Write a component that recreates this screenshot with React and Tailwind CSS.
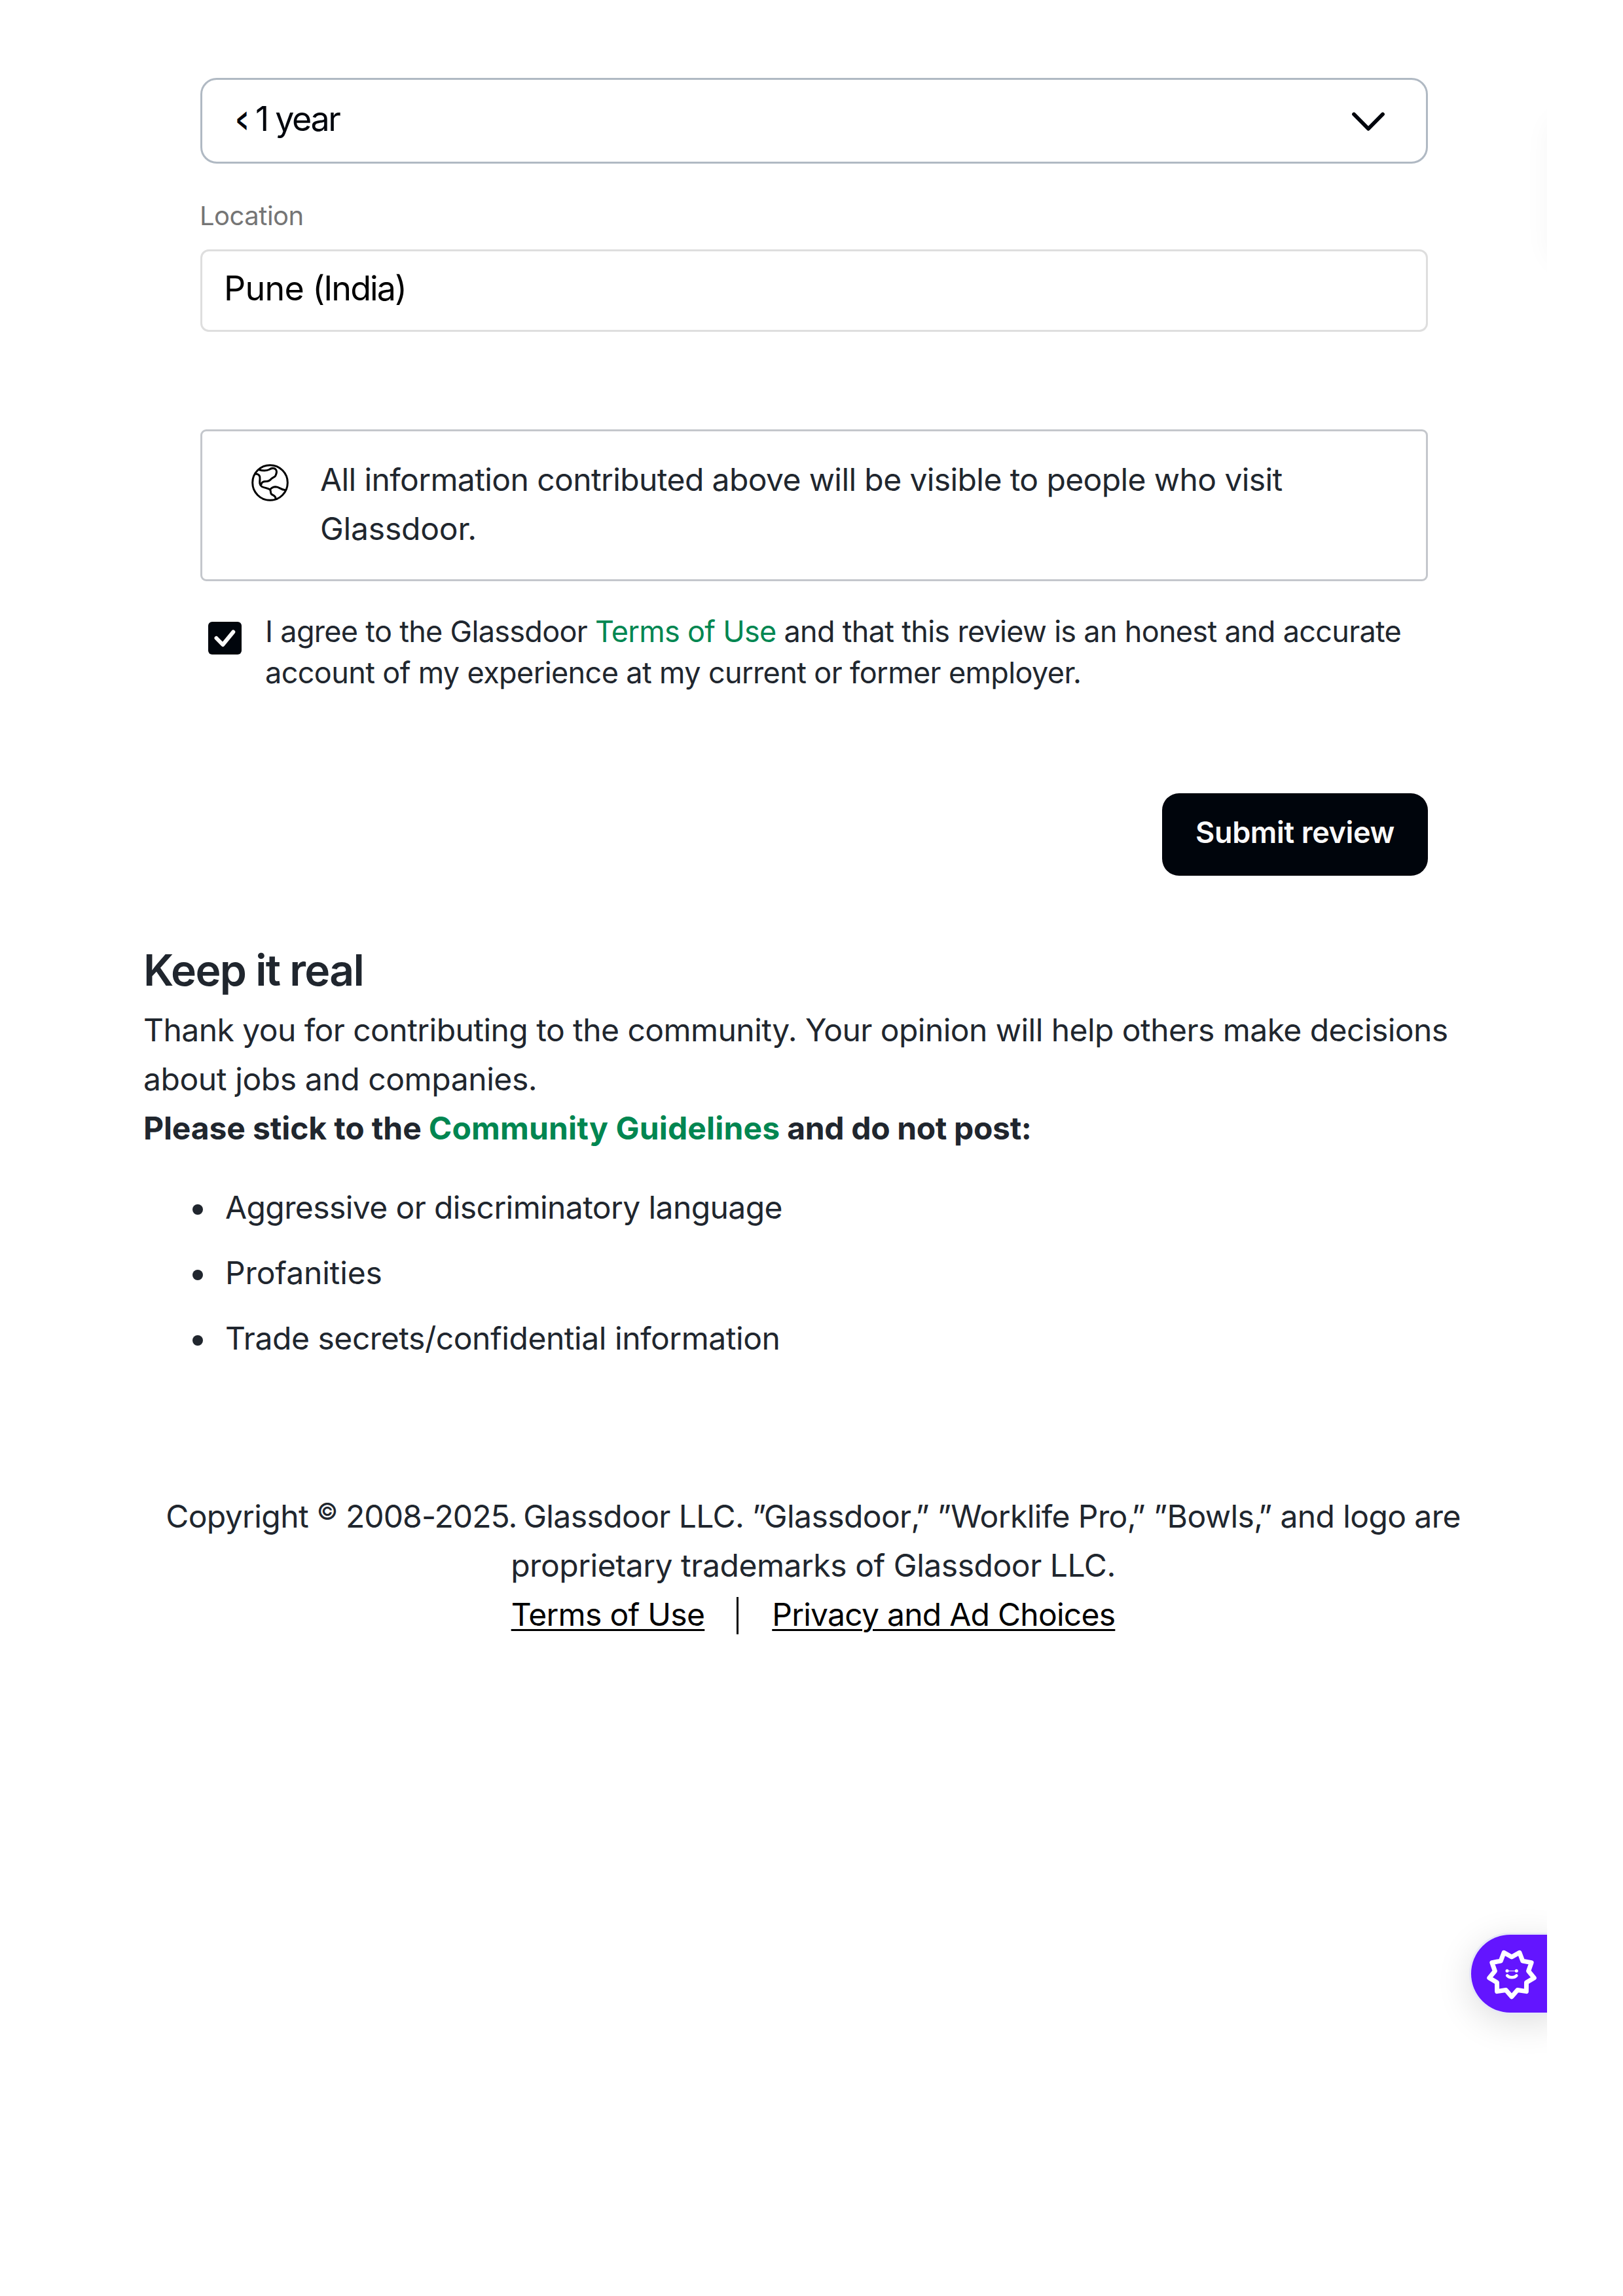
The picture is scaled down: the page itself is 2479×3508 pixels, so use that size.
import React from "react";

const INK = "text-[#20262e]";

function ChevronDown() {
  return (
    <svg className="mt-[2px] h-[36px] w-[56px]" viewBox="0 0 56 36" fill="none" stroke="#00050c" strokeWidth="5.8" strokeLinecap="round" strokeLinejoin="round">
      <path d="M6 6.5 28 28.8 50 6.5" />
    </svg>
  );
}

function Globe() {
  return (
    <svg className="mt-[14px] h-[57px] w-[57px] shrink-0" viewBox="0 0 57 57" fill="none" stroke="#000" strokeWidth="3" strokeLinecap="round" strokeLinejoin="round">
      <circle cx="28.5" cy="28.5" r="26.8" />
      <path d="M11 8.5C17 10.5 23 10.5 27 8.5C30 6.5 34 5.5 37 8C39 10 38.5 14 37 17.5C36 20.5 33 20 30.5 22.5C28 25.5 26.5 26.5 22.5 26.5C18.5 26.5 15.500 27.500 15 31" />
      <path d="M6.500 15C12 15.500 13.500 18.500 13 23C12.500 28 12 32 16 34.500C20 36.500 24 36.500 28.500 39C30.500 36.500 33 34.800 37 34.800C43 35 45 39.500 51 39.500" />
      <path d="M28.500 39C30 41 28.800 44 30.500 46C33 48 37.500 48.500 37 53" />
    </svg>
  );
}

function Check() {
  return (
    <svg className="h-[50px] w-[51px]" viewBox="0 0 51 50" fill="none" stroke="#fafafa" strokeWidth="6" strokeLinecap="round" strokeLinejoin="round">
      <path d="M12.500 25 22.300 35 38.300 15.500" />
    </svg>
  );
}

const starPoints = Array.from({ length: 18 }, (_, i) => {
  const radius = i % 2 === 0 ? 34.8 : 26;
  const angle = ((90 + i * 20) * Math.PI) / 180;
  return `${(38 + radius * Math.cos(angle)).toFixed(2)},${(38 + radius * Math.sin(angle)).toFixed(2)}`;
}).join(" ");

function StarFace() {
  return (
    <svg className="h-[76px] w-[76px] overflow-visible" viewBox="0 0 76 76" fill="none" stroke="#fff" strokeLinecap="round" strokeLinejoin="round">
      <polygon points={starPoints} strokeWidth="7" />
      <path d="M31 33.300H45" strokeWidth="1" />
      <circle cx="31" cy="33.300" r="2.500" fill="#fff" stroke="none" />
      <circle cx="45.300" cy="33.300" r="2.500" fill="#fff" stroke="none" />
      <path d="M31.200 40.500C34.500 44.200 42 44.200 45.300 40.500" strokeWidth="4.600" />
    </svg>
  );
}

const rules = [
  ["Aggressive or discriminatory language", "tracking-[-0.6px]"],
  ["Profanities", "tracking-[-0.15px]"],
  ["Trade secrets/confidential information", "tracking-[-0.45px]"],
];

export default function App() {
  return (
    <div className="relative h-[3508px] w-[2479px] overflow-hidden bg-white font-['Inter',sans-serif] whitespace-nowrap">
      <main className="flex w-[2363px] flex-col pt-[119px]">
        <form className="ml-[306px] flex w-[1875px] flex-col">
          <div className="flex h-[131px] items-center justify-between rounded-[25px] border-[3px] border-[#b0b9c3] pr-[60px] pl-[51px] text-[52px] text-[#00050c]">
            <div className="flex pb-[6px] leading-[64px]">
              <span className="inline-block w-[16px]">
                <span className="inline-block origin-left scale-x-[0.56] font-semibold">&lt;</span>
              </span>
              <span className="ml-[14px]">1</span>
              <span className="ml-[9px] tracking-[-2.4px]">year</span>
            </div>
            <ChevronDown />
          </div>
          <label className="mt-[56px] -ml-px text-[40px] leading-[48px] tracking-[-0.5px] text-[#757575]">Location</label>
          <div className="mt-[27px] flex h-[126px] items-center rounded-[13px] border-[3px] border-[#dedede] pb-[7px] pl-[33px] text-[52px] text-black">
            <span className="tracking-[-0.7px]">Pune</span>
            <span className="ml-[13px] tracking-[-1.9px]">(India)</span>
          </div>
          <div className={`mt-[149px] flex h-[232px] rounded-[9px] border-[3px] border-[#c4c7cc] pt-[36px] pl-[75px] text-[48px] leading-[75px] ${INK}`}>
            <Globe />
            <div className="ml-[48px]">
              <div className="tracking-[-0.6px]">All information contributed above will be visible to people who visit</div>
              <div className="tracking-[-0.2px]">Glassdoor.</div>
            </div>
          </div>
          <div className={`mt-[45px] flex pl-[12px] text-[45px] leading-[63px] ${INK}`}>
            <span className="mt-[17px] flex h-[50px] w-[51px] rounded-[6px] bg-[#00050c]">
              <Check />
            </span>
            <div className="ml-[36px]">
              <div className="tracking-[-0.7px]">
                I agree to the Glassdoor <a className="text-[#008651]">Terms of Use</a> and that this review is an honest and accurate
              </div>
              <div className="tracking-[-0.62px]">account of my experience at my current or former employer.</div>
            </div>
          </div>
          <button type="button" className="mt-[153px] flex h-[126px] w-[406px] items-center justify-center self-end rounded-[26px] bg-[#00050c] pb-[7px] text-[45px] font-semibold tracking-[-0.4px] text-[#fafafa]">
            Submit review
          </button>
        </form>

        <section className={`mt-[99px] ml-[219px] flex w-[2048px] flex-col text-[48px] leading-[75px] ${INK}`}>
          <h2 className="text-[66px] leading-[90px] font-semibold tracking-[-1.7px]">Keep it real</h2>
          <p className="mt-[9px] tracking-[-0.55px]">Thank you for contributing to the community. Your opinion will help others make decisions</p>
          <p className="tracking-[-0.42px]">about jobs and companies.</p>
          <p className="font-bold">
            <span className="tracking-[-0.12px]">Please stick to the </span>
            <a className="tracking-[0.15px] text-[#008651]">Community Guidelines</a>
            <span className="tracking-[-0.35px]"> and do not post:</span>
          </p>
          <ul className="mt-[46px] flex flex-col gap-[25px]">
            {rules.map(([text, tracking]) => (
              <li key={text} className="flex items-center pl-[75px]">
                <span className="mt-[7px] h-[16px] w-[16px] rounded-full bg-[#20262e]" />
                <span className={`ml-[34px] ${tracking}`}>{text}</span>
              </li>
            ))}
          </ul>
        </section>

        <footer className={`mt-[197px] ml-[218px] flex w-[2048px] flex-col items-center text-[48px] leading-[75px] ${INK}`}>
          <p className="flex whitespace-pre tracking-[-0.6px]">
            <span>Copyright </span>
            <span className="-mt-[7px] text-[35px] font-medium">©</span>
            <span className="tracking-[-0.9px]"> 2008-2025. </span>
            <span className="-ml-[3px]">Glassdoor LLC. ”Glassdoor</span>
            <span className="tracking-[-7px]">,</span>
            <span>” ”Worklife Pro</span>
            <span className="tracking-[-7px]">,</span>
            <span>” ”Bowls</span>
            <span className="tracking-[-7px]">,</span>
            <span>” and logo are</span>
          </p>
          <p className="tracking-[-0.46px]">proprietary trademarks of Glassdoor LLC.</p>
          <div className="flex text-black">
            <a className="tracking-[-0.7px] underline decoration-[3px] underline-offset-[5px]">Terms of Use</a>
            <span className="mt-[11px] mr-[51px] ml-[49px] h-[57px] w-[3px] bg-black" />
            <a className="tracking-[-0.75px] underline decoration-[3px] underline-offset-[5px]">Privacy and Ad Choices</a>
          </div>
        </footer>
      </main>

      {/* soft edge of a panel parked off the right side */}
      <div className="absolute top-[100px] left-[2300px] h-[400px] w-[63px] overflow-hidden">
        <div className="mt-[70px] ml-[63px] h-[226px] w-[60px] rounded-[40px] shadow-[0_8px_40px_rgba(0,0,0,0.04)]" />
      </div>

      {/* floating assistant tab docked to the page edge */}
      <div className="absolute top-[2880px] left-[2160px] h-[300px] w-[203px] overflow-hidden">
        <div className="mt-[76px] ml-[87px] flex h-[119px] w-[140px] items-center rounded-l-full bg-[#6315ff] pl-[24px] shadow-[0_0_0_3px_#e6e8f6,0_12px_56px_rgba(0,0,0,0.14)]">
          <StarFace />
        </div>
      </div>
    </div>
  );
}
